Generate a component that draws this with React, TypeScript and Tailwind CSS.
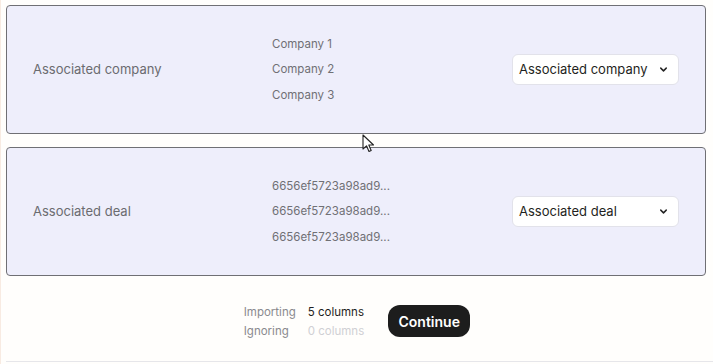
import { ChevronDown } from "lucide-react";

interface MappingRow {
  label: string;
  values: string[];
  selected: string;
}

const rows: MappingRow[] = [
  {
    label: "Associated company",
    values: ["Company 1", "Company 2", "Company 3"],
    selected: "Associated company",
  },
  {
    label: "Associated deal",
    values: ["6656ef5723a98ad9...", "6656ef5723a98ad9...", "6656ef5723a98ad9..."],
    selected: "Associated deal",
  },
];

function Cursor() {
  return (
    <svg
      className="absolute left-[361px] top-[134px]"
      width="14"
      height="20"
      viewBox="0 0 14 20"
    >
      <path
        d="M1 1 L1 15 L4.5 11.8 L7 17.5 L9.2 16.5 L6.8 11 L11.5 11 Z"
        fill="#fff"
        stroke="#222"
        strokeWidth="1.1"
        strokeLinejoin="round"
      />
    </svg>
  );
}

export default function App() {
  return (
    <div
      className="relative w-[713px] h-[364px] overflow-hidden bg-[#fffefc] border-l border-[#f8ebe2]"
      style={{ fontFamily: "Inter, 'Liberation Sans', sans-serif" }}
    >
      <div className="flex flex-col gap-[13px] pt-[5px] pl-[5px] pr-[7px]">
        {rows.map((row) => (
          <div
            key={row.label}
            className="flex items-center h-[129px] bg-[#eeeefb] border border-[#6f6f74] rounded-[4px] pl-[26px] pr-[26px]"
          >
            <div className="w-[239px] text-[13px] text-[#6b6b70]">{row.label}</div>
            <div className="flex-1 flex flex-col gap-[9px]">
              {row.values.map((v, i) => (
                <div
                  key={i}
                  className="whitespace-nowrap text-[11.5px] leading-[16.5px] text-[#707075]"
                >
                  {v}
                </div>
              ))}
            </div>
            <button
              type="button"
              className="flex items-center justify-between w-[167px] h-[31px] pl-[6px] pr-[9px] bg-white border border-[#e2e2ea] rounded-[6px] text-[13px] text-[#1f1f22] whitespace-nowrap"
            >
              <span>{row.selected}</span>
              <ChevronDown className="w-[11px] h-[11px] text-[#222]" strokeWidth={3.2} />
            </button>
          </div>
        ))}
      </div>

      <div className="flex items-center justify-center h-[85px] pt-[5px] gap-[24px]">
        <div className="grid grid-cols-[64px_auto] gap-y-[3px] text-[11.5px] leading-[16px]">
          <span className="text-[#8a8a8f]">Importing</span>
          <span className="text-[#1f1f22]">5 columns</span>
          <span className="text-[#8a8a8f]">Ignoring</span>
          <span className="text-[#d0d0d4]">0 columns</span>
        </div>
        <button
          type="button"
          className="w-[82px] h-[32px] rounded-[12px] bg-[#1d1d1d] text-white text-[14px] font-semibold"
        >
          Continue
        </button>
      </div>

      <div className="ml-[5px] border-t border-[#e6e6ea]" />

      <Cursor />
    </div>
  );
}
